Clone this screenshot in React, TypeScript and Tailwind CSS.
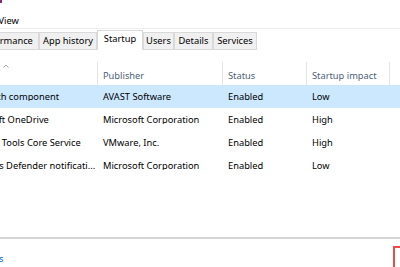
const rows = [
  { name: "AvLaunch component", publisher: "AVAST Software", status: "Enabled", impact: "Low", selected: true },
  { name: "Microsoft OneDrive", publisher: "Microsoft Corporation", status: "Enabled", impact: "High" },
  { name: "VMware Tools Core Service", publisher: "VMware, Inc.", status: "Enabled", impact: "High" },
  { name: "Windows Defender notificati...", publisher: "Microsoft Corporation", status: "Enabled", impact: "Low" },
];

const Tab = ({ label, className }: { label: string; className: string }) => (
  <div
    className={`h-[18px] flex items-center justify-center border border-[#d9d9d9] bg-[#f0f0f0] whitespace-nowrap ${className}`}
  >
    {label}
  </div>
);

export default function App() {
  return (
    <div className="w-[400px] h-[267px] overflow-hidden bg-white flex flex-col font-['Noto_Sans',sans-serif] text-[9.3px] leading-none text-black">
      {/* window edge */}
      <div className="h-[3px] flex">
        <div className="w-[2px] bg-[#7d2f77]" />
      </div>

      {/* menu bar */}
      <div className="h-[26px] flex items-end pb-[3px] border-b border-[#ececec] ml-[-81px] whitespace-nowrap">
        <span className="px-[6px]">File</span>
        <span className="px-[6px]">Options</span>
        <span className="px-[6px]">View</span>
      </div>

      {/* tabs */}
      <div className="h-[21px] flex items-end">
        <Tab label="Performance" className="w-[69px] ml-[-30px]" />
        <Tab label="App history" className="w-[58px]" />
        <div className="h-[20px] w-[46px] flex items-center justify-center pb-[3px] border border-b-0 border-[#d9d9d9] bg-white">
          Startup
        </div>
        <Tab label="Users" className="w-[31px]" />
        <Tab label="Details" className="w-[39px]" />
        <Tab label="Services" className="w-[44px]" />
      </div>

      {/* column headers */}
      <div className="h-[35px] flex items-end text-[#4c607a] whitespace-nowrap">
        <div className="relative w-[97px] h-[23px]">
          <svg className="absolute left-[3px] top-[2px]" width="6" height="4" viewBox="0 0 6 4">
            <polyline points="0.5,3.5 3,1 5.5,3.5" fill="none" stroke="#9aa4b4" strokeWidth="1" />
          </svg>
        </div>
        <div className="w-[125px] h-[23px] flex items-center pt-[4px] pl-[5px] border-l border-[#e5e5e5]">Publisher</div>
        <div className="w-[84px] h-[23px] flex items-center pt-[4px] pl-[5px] border-l border-[#e5e5e5]">Status</div>
        <div className="w-[83px] h-[23px] flex items-center pt-[4px] pl-[5px] border-l border-[#e5e5e5]">Startup impact</div>
        <div className="flex-1 h-[23px] border-l border-[#e5e5e5]" />
      </div>

      {/* rows */}
      {rows.map((r) => (
        <div
          key={r.name}
          className={`h-[23px] flex items-center whitespace-nowrap ${r.selected ? "bg-[#cce8ff]" : ""}`}
        >
          <div className="w-[97px] overflow-hidden">
            <div className="ml-[-36px]">{r.name}</div>
          </div>
          <div className="w-[125px] pl-[6px] overflow-hidden">{r.publisher}</div>
          <div className="w-[84px] pl-[6px]">{r.status}</div>
          <div className="w-[83px] pl-[6px]">{r.impact}</div>
        </div>
      ))}

      <div className="flex-1" />
      <div className="h-[2px] bg-[#d4d4d4]" />

      {/* footer */}
      <div className="h-[28px] flex items-start">
        <span className="mt-[15px] ml-[-54px] text-[#0066cc] whitespace-nowrap">Fewer details</span>
        <div className="ml-auto mt-[7px] mr-[-13px] w-[20px] h-[30px] border-2 border-[#f04a4a]" />
      </div>
    </div>
  );
}
